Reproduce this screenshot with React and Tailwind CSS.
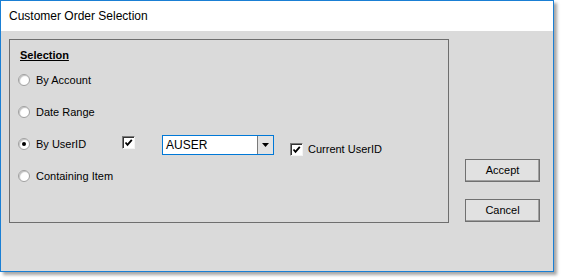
const Radio = ({ checked }) => (
    <div className="w-[12px] h-[12px] rounded-full bg-white border border-[#a0a0a0] shadow-[inset_1px_1px_1px_rgba(0,0,0,0.25)] flex items-center justify-center shrink-0">
        {checked && <div className="w-[4px] h-[4px] rounded-full bg-black" />}
    </div>
);

const Check = () => (
    <div className="w-[13px] h-[13px] bg-white border border-t-[#7a7a7a] border-l-[#7a7a7a] border-r-[#f4f4f4] border-b-[#f4f4f4] shadow-[inset_1px_1px_0_#333] flex items-center justify-center shrink-0">
        <svg width="9" height="9" viewBox="0 0 9 9">
            <path d="M1.5 4.5 L3.5 6.8 L7.8 1.8" fill="none" stroke="#000" strokeWidth="1.8" />
        </svg>
    </div>
);

const RadioRow = ({ label, checked, children }) => (
    <div className="flex items-start h-[32px]">
        <div className="flex items-center h-[32px] w-[104px] shrink-0">
            <Radio checked={checked} />
            <span className="ml-[6px] whitespace-nowrap">{label}</span>
        </div>
        {children}
    </div>
);

const Button = ({ children }) => (
    <button className="w-[75px] h-[23px] bg-[#e1e1e1] border border-[#707070] shadow-[inset_-1px_-1px_0_#a0a0a0] text-[11px] text-black flex items-center justify-center">
        {children}
    </button>
);

export default function App() {
    return (
        <div className="w-[561px] h-[279px] bg-white text-[11px] text-black" style={{ fontFamily: '"Liberation Sans", Arial, sans-serif' }}>
            <div className="w-[554px] h-[272px] border border-[#1a7fd4] shadow-[3px_3px_3px_rgba(0,0,0,0.35)] flex flex-col">
                <div className="h-[30px] bg-white flex items-center pl-[8px] text-[12px] shrink-0">
                    Customer Order Selection
                </div>
                <div className="flex-1 bg-[#dadada] flex pl-[8px] pt-[8px]">
                    <div className="w-[440px] h-[184px] border border-[#6e6e6e] pt-[8px] pl-[8px]">
                        <div className="h-[16px] leading-[14px] pl-[2px] font-bold underline">Selection</div>
                        <RadioRow label="By Account" />
                        <RadioRow label="Date Range" />
                        <RadioRow label="By UserID" checked>
                            <div className="mt-[8px]">
                                <Check />
                            </div>
                            <div className="ml-[27px] mt-[7px] w-[112px] h-[20px] border border-[#0078d7] bg-white flex">
                                <div className="flex-1 pl-[3px] flex items-center text-[12px]">AUSER</div>
                                <div className="w-[16px] border-l border-[#7a7a7a] bg-[#e3e3e3] flex items-center justify-center">
                                    <svg width="7" height="4" viewBox="0 0 7 4">
                                        <path d="M0 0 H7 L3.5 4 Z" fill="#000" />
                                    </svg>
                                </div>
                            </div>
                            <div className="ml-[16px] mt-[13px] flex items-center">
                                <Check />
                                <span className="ml-[5px] whitespace-nowrap">Current UserID</span>
                            </div>
                        </RadioRow>
                        <RadioRow label="Containing Item" />
                    </div>
                    <div className="ml-[16px] mt-[120px] flex flex-col gap-[17px]">
                        <Button>Accept</Button>
                        <Button>Cancel</Button>
                    </div>
                </div>
            </div>
        </div>
    );
}
